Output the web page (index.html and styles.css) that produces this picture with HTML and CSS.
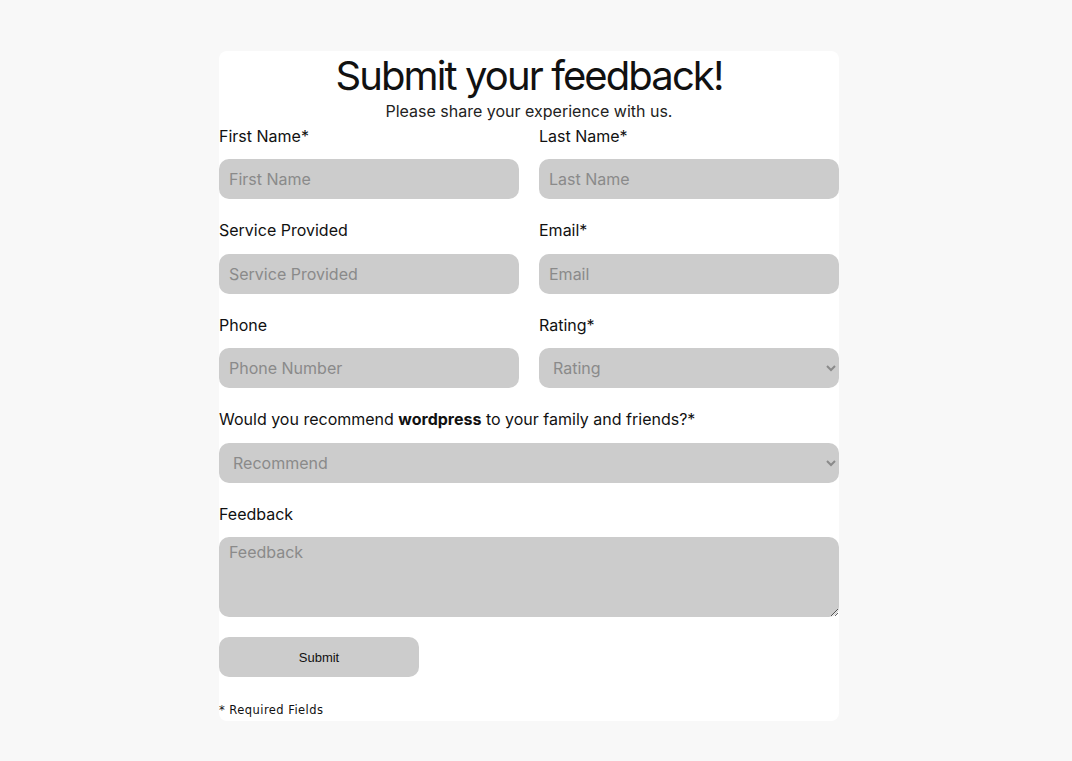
FILE: index.html
```html
<!DOCTYPE html>
<html lang="en">
<head>
<meta charset="utf-8">
<title>Submit your feedback!</title>
<link rel="stylesheet" href="styles.css">
</head>
<body>
<form class="card">
  <h1 class="title">Submit your feedback!</h1>
  <p class="subtitle">Please share your experience with us.</p>
  <div class="grid">
    <div class="field">
      <label class="label">First Name*</label>
      <input class="control" type="text" placeholder="First Name">
    </div>
    <div class="field">
      <label class="label">Last Name*</label>
      <input class="control" type="text" placeholder="Last Name">
    </div>
    <div class="field">
      <label class="label">Service Provided</label>
      <input class="control" type="text" placeholder="Service Provided">
    </div>
    <div class="field">
      <label class="label">Email*</label>
      <input class="control" type="text" placeholder="Email">
    </div>
    <div class="field">
      <label class="label">Phone</label>
      <input class="control" type="text" placeholder="Phone Number">
    </div>
    <div class="field">
      <label class="label">Rating*</label>
      <select class="control select">
        <option>Rating</option>
      </select>
    </div>
    <div class="field wide">
      <label class="label">Would you recommend <b>wordpress</b> to your family and friends?*</label>
      <select class="control select">
        <option>Recommend</option>
      </select>
    </div>
    <div class="field wide">
      <label class="label">Feedback</label>
      <textarea class="control textarea" placeholder="Feedback"></textarea>
    </div>
  </div>
  <button class="submit" type="button">Submit</button>
  <p class="note">* Required Fields</p>
</form>
</body>
</html>
```

FILE: styles.css
```css
html, body {
  margin: 0;
  padding: 0;
  background: #f8f8f8;
}
body {
  font-family: Inter, "Noto Sans", sans-serif;
  color: #111;
  padding-top: 51px;
  padding-right: 14px;
}
.card {
  width: 620px;
  margin: 0 auto;
  background: #fff;
  border-radius: 8px;
  padding: 0 0 4px 0;
  box-sizing: border-box;
}
.title {
  margin: 0;
  text-align: center;
  font-size: 40px;
  font-weight: 400;
  letter-spacing: -1.9px;
  line-height: 50px;
  color: #111;
}
.subtitle {
  margin: 0 0 5.5px 0;
  text-align: center;
  font-size: 16px;
  line-height: 20px;
  color: #222;
}
.grid {
  display: grid;
  grid-template-columns: 300px 300px;
  column-gap: 20px;
}
.field {
  display: flex;
  flex-direction: column;
  margin-bottom: 22px;
}
.field.wide {
  grid-column: 1 / span 2;
}
.label {
  font-size: 16px;
  line-height: 19.5px;
  margin-bottom: 13px;
  color: #111;
}
.label b {
  font-weight: 700;
}
.control {
  box-sizing: border-box;
  height: 40px;
  border: none;
  border-radius: 10px;
  background: #cccccc;
  padding: 0 10px;
  font-family: Inter, "Noto Sans", sans-serif;
  font-size: 16px;
  color: #888;
  outline: none;
}
.control::placeholder {
  color: #8a8a8a;
}
.select {
  color: #8a8a8a;
  padding-left: 10px;
}
.textarea {
  height: 80px;
  padding: 5px 10px;
  resize: vertical;
}
.submit {
  display: block;
  width: 200px;
  height: 40px;
  margin-top: -2px;
  border: none;
  border-radius: 10px;
  background: #cccccc;
  font-family: "Liberation Sans", Arial, sans-serif;
  font-size: 13px;
  color: #111;
}
.note {
  margin: 26px 0 0 0;
  font-family: "DejaVu Sans", sans-serif;
  font-size: 11.5px;
  line-height: 14px;
  letter-spacing: 0.45px;
  color: #111;
}
```
